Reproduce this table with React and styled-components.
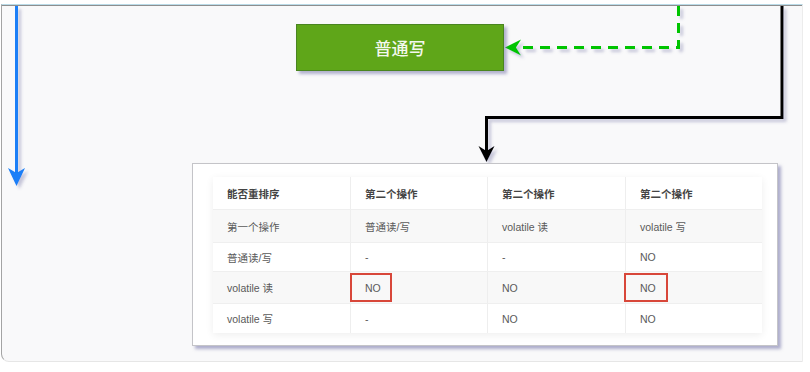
import styled, { createGlobalStyle } from "styled-components";

const GlobalStyle = createGlobalStyle`
  html, body {
    margin: 0;
    padding: 0;
    background: #ffffff;
  }
`;

const Stage = styled.div`
  position: relative;
  width: 810px;
  height: 372px;
  overflow: hidden;
  background: #ffffff;
  font-family: "Liberation Sans", "Noto Sans CJK SC", sans-serif;
`;

const Frame = styled.div`
  margin: 4px 0 0 1px;
  width: 800px;
  height: 356px;
  background: #f9f9fa;
  border-top: 1px solid #b9dbe8;
  border-left: 1px solid #a4a4a4;
  border-right: 1px solid #ececec;
  border-bottom: 1px solid #e6e6e6;
  border-bottom-left-radius: 8px;
  box-shadow: inset 0 1px 0 #8e8e8e;
`;

const Edges = styled.svg`
  position: absolute;
  left: 0;
  top: 0;
`;

const Node = styled.div`
  position: absolute;
  left: 296px;
  top: 24px;
  width: 206px;
  height: 45px;
  display: flex;
  align-items: center;
  justify-content: center;
  background: #5fa619;
  border: 1px solid #4a8520;
  box-shadow: 3px 3px 3px rgba(90, 90, 150, 0.45);
  color: #f4f8ee;
  font-family: "Noto Sans CJK SC", sans-serif;
  font-size: 17px;
  font-weight: 500;
`;

const Card = styled.div`
  position: absolute;
  left: 192px;
  top: 163px;
  width: 586px;
  height: 183px;
  padding: 13px 0 0 20px;
  box-sizing: border-box;
  background: #ffffff;
  border: 1px solid #c4c4c8;
  box-shadow: 3px 3px 3px rgba(100, 100, 160, 0.5);
`;

const Table = styled.div`
  width: 549px;
  display: flex;
  flex-direction: column;
  box-shadow: 0 2px 8px rgba(0, 0, 0, 0.07);
`;

const Row = styled.div`
  display: grid;
  grid-template-columns: 137px 137px 138px 137px;
  height: ${(p) => p.$h}px;
  background: ${(p) => (p.$alt ? "#f8f8f8" : "#ffffff")};
  border-top: ${(p) => (p.$first ? "none" : "1px solid #efefef")};
  box-sizing: border-box;
`;

const Cell = styled.div`
  position: relative;
  display: flex;
  align-items: center;
  padding-left: 14px;
  border-left: ${(p) => (p.$first ? "none" : "1px solid #eeeeee")};
  font-size: ${(p) => (p.$head ? "10.5px" : "10.5px")};
  font-weight: ${(p) => (p.$head ? 600 : 400)};
  color: ${(p) => (p.$head ? "#444444" : "#5a5a5a")};
`;

const Highlight = styled.span`
  position: absolute;
  left: ${(p) => p.$x}px;
  top: 1px;
  width: ${(p) => p.$w}px;
  height: 29px;
  border: 2px solid #d8473a;
  box-sizing: border-box;
`;

const rows = [
  { h: 32, head: true, cells: ["能否重排序", "第二个操作", "第二个操作", "第二个操作"] },
  { h: 33, alt: true, cells: ["第一个操作", "普通读/写", "volatile 读", "volatile 写"] },
  { h: 29, cells: ["普通读/写", "-", "-", "NO"] },
  { h: 32, alt: true, cells: ["volatile 读", "NO", "NO", "NO"], marks: { 1: [-1, 42], 3: [-2, 44] } },
  { h: 30, cells: ["volatile 写", "-", "NO", "NO"] },
];

function Diagram() {
  return (
    <Edges width="810" height="372" viewBox="0 0 810 372">
      <defs>
        <filter id="sh" x="-20%" y="-20%" width="140%" height="140%">
          <feDropShadow dx="3" dy="3" stdDeviation="1.5" floodColor="#66669a" floodOpacity="0.35" />
        </filter>
      </defs>
      <g filter="url(#sh)">
        <line x1="16.5" y1="6" x2="16.5" y2="176" stroke="#1a7ff7" strokeWidth="3" />
        <path d="M16.5 186 L8 168 L16.5 173 L25 168 Z" fill="#1a7ff7" />
      </g>
      <g filter="url(#sh)">
        <path
          d="M678.5 6 V47.5 H516"
          fill="none"
          stroke="#00c400"
          strokeWidth="3"
          strokeDasharray="10 7"
        />
        <path d="M505 47.5 L521 39.5 L516 47.5 L521 55.5 Z" fill="#00c400" />
      </g>
      <g filter="url(#sh)">
        <path d="M782 6 V117.5 H486.5 V152" fill="none" stroke="#000000" strokeWidth="3" />
        <path d="M486.5 162 L478.5 146 L486.5 151 L494.5 146 Z" fill="#000000" />
      </g>
    </Edges>
  );
}

export default function App() {
  return (
    <>
      <GlobalStyle />
      <Stage>
        <Frame />
        <Diagram />
        <Node>普通写</Node>
        <Card>
          <Table>
            {rows.map((r, i) => (
              <Row key={i} $h={r.h} $alt={r.alt} $first={i === 0}>
                {r.cells.map((c, j) => (
                  <Cell key={j} $first={j === 0} $head={r.head}>
                    {c}
                    {r.marks && r.marks[j] && <Highlight $x={r.marks[j][0]} $w={r.marks[j][1]} />}
                  </Cell>
                ))}
              </Row>
            ))}
          </Table>
        </Card>
      </Stage>
    </>
  );
}
